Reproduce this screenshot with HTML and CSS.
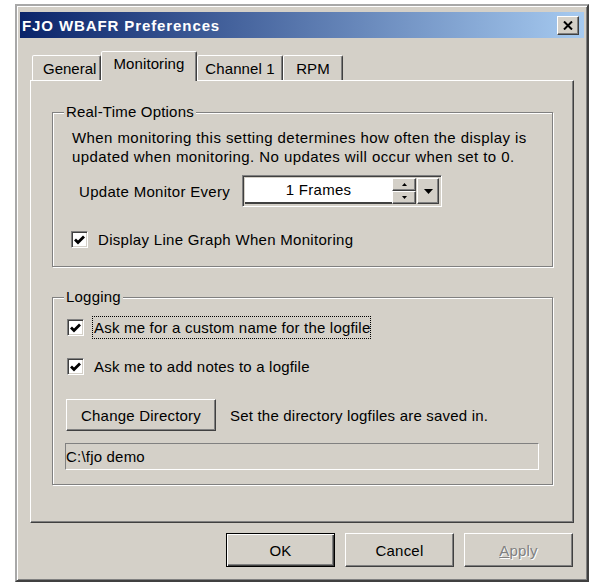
FILE: index.html
```html
<!DOCTYPE html>
<html lang="en">
<head>
<meta charset="utf-8">
<title>FJO WBAFR Preferences</title>
<link rel="stylesheet" href="styles.css">
</head>
<body>
<div class="window">
  <div class="titlebar">
    <span class="title">FJO WBAFR Preferences</span>
    <span class="close-btn">
      <svg width="10" height="9" viewBox="0 0 10 9"><path d="M1 0.5 L9 8.5 M9 0.5 L1 8.5" stroke="#000" stroke-width="2" fill="none"/></svg>
    </span>
  </div>
  <div class="dialog-body">
    <div class="tabs">
      <div class="tab tab-general">General</div>
      <div class="tab tab-active tab-monitoring">Monitoring</div>
      <div class="tab tab-channel">Channel 1</div>
      <div class="tab tab-rpm">RPM</div>
    </div>
    <div class="panel">
      <fieldset class="group group-realtime">
        <legend>Real-Time Options</legend>
        <div class="group-body">
          <p class="note">When monitoring this setting determines how often the display is<br>updated when monitoring. No updates will occur when set to 0.</p>
          <div class="field-row">
            <span class="field-label">Update Monitor Every</span>
            <div class="spin-combo">
              <div class="spin-value">1 Frames</div>
              <div class="spin-buttons">
                <span class="spin-btn"><svg width="5" height="3" viewBox="0 0 5 3"><path d="M2.5 0 L5 3 L0 3 Z" fill="#000"/></svg></span>
                <span class="spin-btn"><svg width="5" height="3" viewBox="0 0 5 3"><path d="M0 0 L5 0 L2.5 3 Z" fill="#000"/></svg></span>
              </div>
              <div class="drop-btn"><svg width="9" height="5" viewBox="0 0 9 5"><path d="M0 0 L9 0 L4.5 5 Z" fill="#000"/></svg></div>
            </div>
          </div>
          <div class="check check-graph">
            <span class="check-box"><svg width="11" height="10" viewBox="0 0 11 10"><path d="M1 4.5 L4 7.5 L10 1.5" stroke="#000" stroke-width="2.8" fill="none"/></svg></span>
            <span class="check-text">Display Line Graph When Monitoring</span>
          </div>
        </div>
      </fieldset>
      <fieldset class="group group-logging">
        <legend>Logging</legend>
        <div class="group-body">
          <div class="check check-log">
            <span class="check-box"><svg width="11" height="10" viewBox="0 0 11 10"><path d="M1 4.5 L4 7.5 L10 1.5" stroke="#000" stroke-width="2.8" fill="none"/></svg></span>
            <span class="check-text focused">Ask me for a custom name for the logfile</span>
          </div>
          <div class="check check-log check-notes">
            <span class="check-box"><svg width="11" height="10" viewBox="0 0 11 10"><path d="M1 4.5 L4 7.5 L10 1.5" stroke="#000" stroke-width="2.8" fill="none"/></svg></span>
            <span class="check-text">Ask me to add notes to a logfile</span>
          </div>
          <div class="dir-row">
            <span class="btn btn-dir">Change Directory</span>
            <span class="dir-hint">Set the directory logfiles are saved in.</span>
          </div>
          <div class="path-field">C:\fjo demo</div>
        </div>
      </fieldset>
    </div>
    <div class="actions">
      <span class="btn btn-action btn-default">OK</span>
      <span class="btn btn-action">Cancel</span>
      <span class="btn btn-action btn-disabled"><u>A</u>pply</span>
    </div>
  </div>
</div>
</body>
</html>
```
FILE: styles.css
```css
* { box-sizing: border-box; }

body {
  margin: 0;
  background: #fff;
  font-family: "Liberation Sans", Arial, sans-serif;
  font-size: 15px;
  letter-spacing: 0.2px;
  color: #000;
}

/* dialog frame */
.window {
  margin: 4px 0 0 15px;
  width: 574px;
  height: 578px;
  background: #d4d0c8;
  border: 2px solid;
  border-color: #a8a8a8 #404040 #404040 #a8a8a8;
  box-shadow: inset 1px 1px #fff, inset -1px -1px #808080;
  padding: 6px 3px 3px 3px;
  display: flex;
  flex-direction: column;
}

.titlebar {
  height: 26px;
  flex: 0 0 26px;
  background: linear-gradient(to right, #0a246a, #a6caf0);
  display: flex;
  align-items: center;
  justify-content: space-between;
  padding: 0 5px 0 2px;
}

.title {
  color: #fff;
  font-weight: bold;
  font-size: 15px;
  letter-spacing: 0.9px;
}

.close-btn {
  width: 22px;
  height: 19px;
  background: #d4d0c8;
  border: 1px solid;
  border-color: #fff #404040 #404040 #fff;
  box-shadow: inset -1px -1px #808080;
  display: flex;
  align-items: center;
  justify-content: center;
}

.dialog-body {
  flex: 1;
  display: flex;
  flex-direction: column;
  padding: 13px 10px 10px 10px;
}

/* tab strip */
.tabs {
  height: 29px;
  display: flex;
  align-items: flex-end;
  padding-left: 2px;
  letter-spacing: 0.1px;
}

.tab {
  height: 25px;
  background: #d4d0c8;
  border: 1px solid;
  border-bottom: none;
  border-color: #fff #404040 transparent #fff;
  box-shadow: inset -1px 0 #808080;
  border-radius: 2px 2px 0 0;
  text-align: center;
  line-height: 22px;
  padding-top: 2px;
}

.tab-general { width: 69px; text-align: left; padding-left: 10px; letter-spacing: 0; }
.tab-monitoring { width: 96px; }
.tab-channel { width: 86px; }
.tab-rpm { width: 60px; }

.tab-active {
  position: relative;
  z-index: 1;
  height: 30px;
  margin-bottom: -1px;
  line-height: 24px;
  padding-top: 0;
}

/* tab page */
.panel {
  flex: 1;
  border: 1px solid;
  border-color: #fff #404040 #404040 #fff;
  box-shadow: inset -1px -1px #808080;
  padding: 0 20px 0 21px;
}

.group {
  margin: 0;
  padding: 0;
  min-width: 0;
  border: 1px solid #808080;
  box-shadow: inset 1px 1px #fff, 1px 1px #fff;
}

.group legend {
  margin-left: 11px;
  padding: 0 2px;
  line-height: 18px;
  background: #d4d0c8;
}

.group-body {
  padding: 7px 13px 17px 14px;
}

.group-realtime { margin-top: 22px; }
.group-logging { margin-top: 21px; }
.group-logging .group-body { padding-top: 10px; padding-bottom: 14px; }

.note {
  margin: 0 0 0 5px;
  line-height: 19px;
  letter-spacing: 0.42px;
}

.field-row {
  display: flex;
  align-items: center;
  margin: 9px 0 0 12px;
  height: 32px;
  letter-spacing: 0.3px;
}

.field-label {
  flex: 0 0 163px;
}

/* spin box with drop-down */
.spin-combo {
  width: 200px;
  height: 32px;
  display: flex;
  border: 1px solid;
  border-color: #808080 #fff #fff #808080;
  box-shadow: inset 1px 1px #404040, inset -1px -1px #d4d0c8;
  padding: 2px;
  background: #d4d0c8;
}

.spin-value {
  flex: 1;
  background: #fff;
  text-align: center;
  line-height: 24px;
  border-bottom: 2px solid #404040;
}

.spin-buttons {
  width: 24px;
  display: flex;
  flex-direction: column;
}

.spin-btn, .drop-btn {
  background: #d4d0c8;
  border: 1px solid;
  border-color: #fff #404040 #404040 #fff;
  box-shadow: inset -1px -1px #808080;
  display: flex;
  align-items: center;
  justify-content: center;
}

.spin-btn { flex: 1; }

.drop-btn {
  width: 22px;
  margin-left: 1px;
}

/* check boxes */
.check {
  display: flex;
  align-items: center;
}

.check-graph {
  margin: 23px 0 0 4px;
  height: 19px;
  letter-spacing: 0.3px;
}

.check-box {
  width: 17px;
  height: 17px;
  flex: 0 0 17px;
  background: #fff;
  border: 1px solid;
  border-color: #808080 #fff #fff #808080;
  box-shadow: inset 1px 1px #404040, inset -1px -1px #d4d0c8;
  display: flex;
  align-items: center;
  justify-content: center;
}

.check-graph .check-text { margin-left: 10px; }

.check-log { height: 23px; }
.check-log .check-text {
  margin-left: 8px;
  line-height: 19px;
  padding: 1px 0 1px 1px;
  border: 1px dotted transparent;
}
.check-log .check-text.focused { border-color: #000; }

.check-notes { margin-top: 16px; }

/* push buttons */
.btn {
  display: flex;
  align-items: center;
  justify-content: center;
  background: #d4d0c8;
  border: 1px solid;
  border-color: #fff #404040 #404040 #fff;
  box-shadow: inset -1px -1px #808080;
}

.dir-row {
  display: flex;
  align-items: center;
  margin-top: 21px;
}

.btn-dir {
  width: 150px;
  height: 32px;
  margin-left: -1px;
}

.dir-hint { margin-left: 14px; }

.path-field {
  margin: 12px 0 0 -2px;
  width: 474px;
  height: 27px;
  border: 1px solid;
  border-color: #808080 #fff #fff #808080;
  line-height: 25px;
  padding-left: 0;
}

.actions {
  display: flex;
  justify-content: flex-end;
  gap: 10px;
  margin-top: 10px;
  padding-right: 1px;
}

.btn-action {
  width: 109px;
  height: 34px;
}

.btn-default {
  border: 1px solid #000;
  box-shadow: inset 1px 1px #fff, inset -1px -1px #404040, inset -2px -2px #808080;
}

.btn-disabled {
  color: #808080;
  text-shadow: 1px 1px #fff;
}
```
